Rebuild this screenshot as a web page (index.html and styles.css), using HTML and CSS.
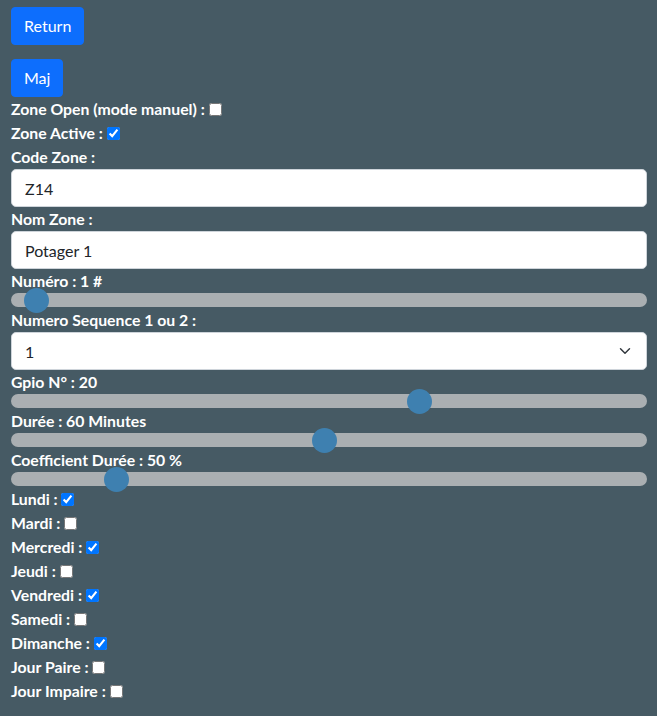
FILE: index.html
```html
<!DOCTYPE html>
<html lang="fr">
<head>
<meta charset="utf-8">
<title>Zone</title>
<link rel="stylesheet" href="styles.css">
</head>
<body>
<div class="page">
  <div class="actions">
    <button class="btn">Return</button>
    <button class="btn">Maj</button>
  </div>
  <form class="form">
    <label class="row">Zone Open (mode manuel) : <input type="checkbox"></label>
    <label class="row">Zone Active : <input type="checkbox" checked></label>
    <label class="row">Code Zone :</label>
    <input class="field" type="text" value="Z14">
    <label class="row">Nom Zone :</label>
    <input class="field" type="text" value="Potager 1">
    <label class="row">Numéro : 1 #</label>
    <input class="range" type="range" min="0" max="1000" value="21">
    <label class="row">Numero Sequence 1 ou 2 :</label>
    <select class="field select">
      <option>1</option>
      <option>2</option>
    </select>
    <label class="row">Gpio N° : 20</label>
    <input class="range" type="range" min="0" max="1000" value="648">
    <label class="row">Durée : 60 Minutes</label>
    <input class="range" type="range" min="0" max="1000" value="492">
    <label class="row">Coefficient Durée : 50 %</label>
    <input class="range" type="range" min="0" max="1000" value="153">
    <label class="row">Lundi : <input type="checkbox" checked></label>
    <label class="row">Mardi : <input type="checkbox"></label>
    <label class="row">Mercredi : <input type="checkbox" checked></label>
    <label class="row">Jeudi : <input type="checkbox"></label>
    <label class="row">Vendredi : <input type="checkbox" checked></label>
    <label class="row">Samedi : <input type="checkbox"></label>
    <label class="row">Dimanche : <input type="checkbox" checked></label>
    <label class="row">Jour Paire : <input type="checkbox"></label>
    <label class="row">Jour Impaire : <input type="checkbox"></label>
  </form>
</div>
</body>
</html>
```

FILE: styles.css
```css
html, body {
  margin: 0;
  padding: 0;
  background: #465a64;
  font-family: Lato, "Liberation Sans", sans-serif;
}

.page {
  padding: 7px 10px 20px 11px;
}

.actions {
  display: flex;
  flex-direction: column;
  align-items: flex-start;
  gap: 14px;
}

.btn {
  font-family: Lato, "Liberation Sans", sans-serif;
  font-size: 16px;
  line-height: 24px;
  color: #fff;
  background: #0d6efd;
  border: 1px solid #0d6efd;
  border-radius: 4px;
  padding: 6px 12px;
  height: 38px;
  cursor: pointer;
}

.form {
  display: flex;
  flex-direction: column;
}

.row {
  display: block;
  color: #fff;
  font-weight: bold;
  font-size: 15.8px;
  line-height: 24px;
  height: 24px;
}

.row input[type="checkbox"] {
  width: 13px;
  height: 13px;
  margin: 0;
  vertical-align: -1px;
}

.field {
  box-sizing: border-box;
  width: 100%;
  height: 38px;
  margin: 0;
  padding: 6px 12px 6px 13px;
  font-family: Lato, "Liberation Sans", sans-serif;
  font-size: 16px;
  color: #212529;
  background-color: #fff;
  border: 1px solid #ced4da;
  border-radius: 5px;
  outline: none;
}

.select {
  -webkit-appearance: none;
  appearance: none;
  background-image: url("data:image/svg+xml,%3csvg xmlns='http://www.w3.org/2000/svg' viewBox='0 0 16 16'%3e%3cpath fill='none' stroke='%23343a40' stroke-linecap='round' stroke-linejoin='round' stroke-width='2' d='m2 5 6 6 6-6'/%3e%3c/svg%3e");
  background-repeat: no-repeat;
  background-position: right 14px center;
  background-size: 14px 12px;
}

.range {
  -webkit-appearance: none;
  appearance: none;
  display: block;
  width: 100%;
  height: 14px;
  margin: 0 0 1px 0;
  padding: 0;
  background: transparent;
  outline: none;
}

.range::-webkit-slider-runnable-track {
  height: 14px;
  background: #aaafb2;
  border-radius: 7px;
}

.range::-webkit-slider-thumb {
  -webkit-appearance: none;
  appearance: none;
  width: 25px;
  height: 25px;
  margin-top: -5px;
  border: none;
  border-radius: 50%;
  background: #3e80b0;
}
```
